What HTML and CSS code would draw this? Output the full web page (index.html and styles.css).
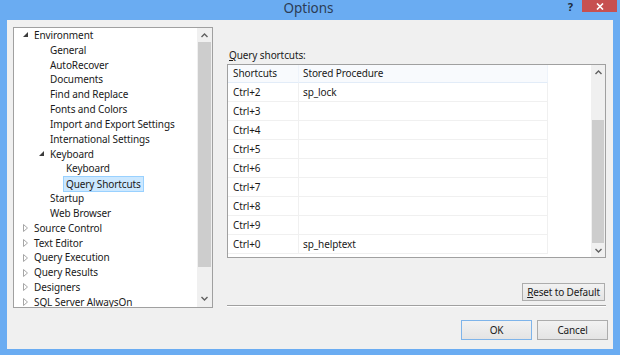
FILE: index.html
```html
<!DOCTYPE html>
<html lang="en">
<head>
    <meta charset="UTF-8">
    <title>Options</title>
    <link rel="stylesheet" href="styles.css">
</head>
<body>

    <div class="window">
        <div class="titlebar">
            <span></span>
            <span class="title">Options</span>
            <div class="controls">
                <span class="help">?</span>
                <span class="close">
                    <svg width="8" height="7" viewBox="0 0 8 7"><path d="M1 0.5 L7 6.5 M7 0.5 L1 6.5" stroke="#fff" stroke-width="1.6"/></svg>
                </span>
            </div>
        </div>

        <div class="client">
            <div class="top">
                <div class="tree">
                    <ul class="tree-list">
                        <li class="lvl0"><span class="arrow"><svg width="6" height="6" viewBox="0 0 6 6"><polygon points="5,0 5,5 0,5" fill="#3c3c3c"/></svg></span>Environment</li>
                        <li class="lvl1"><span class="arrow"></span>General</li>
                        <li class="lvl1"><span class="arrow"></span>AutoRecover</li>
                        <li class="lvl1"><span class="arrow"></span>Documents</li>
                        <li class="lvl1"><span class="arrow"></span>Find and Replace</li>
                        <li class="lvl1"><span class="arrow"></span>Fonts and Colors</li>
                        <li class="lvl1"><span class="arrow"></span>Import and Export Settings</li>
                        <li class="lvl1"><span class="arrow"></span>International Settings</li>
                        <li class="lvl1"><span class="arrow"><svg width="6" height="6" viewBox="0 0 6 6"><polygon points="5,0 5,5 0,5" fill="#3c3c3c"/></svg></span>Keyboard</li>
                        <li class="lvl2"><span class="arrow"></span>Keyboard</li>
                        <li class="lvl2"><span class="arrow"></span><span class="sel">Query Shortcuts</span></li>
                        <li class="lvl1"><span class="arrow"></span>Startup</li>
                        <li class="lvl1"><span class="arrow"></span>Web Browser</li>
                        <li class="lvl0"><span class="arrow"><svg width="5" height="8" viewBox="0 0 5 8"><polygon points="0.5,0.5 4.5,4 0.5,7.5" fill="none" stroke="#a6a6a6"/></svg></span>Source Control</li>
                        <li class="lvl0"><span class="arrow"><svg width="5" height="8" viewBox="0 0 5 8"><polygon points="0.5,0.5 4.5,4 0.5,7.5" fill="none" stroke="#a6a6a6"/></svg></span>Text Editor</li>
                        <li class="lvl0"><span class="arrow"><svg width="5" height="8" viewBox="0 0 5 8"><polygon points="0.5,0.5 4.5,4 0.5,7.5" fill="none" stroke="#a6a6a6"/></svg></span>Query Execution</li>
                        <li class="lvl0"><span class="arrow"><svg width="5" height="8" viewBox="0 0 5 8"><polygon points="0.5,0.5 4.5,4 0.5,7.5" fill="none" stroke="#a6a6a6"/></svg></span>Query Results</li>
                        <li class="lvl0"><span class="arrow"><svg width="5" height="8" viewBox="0 0 5 8"><polygon points="0.5,0.5 4.5,4 0.5,7.5" fill="none" stroke="#a6a6a6"/></svg></span>Designers</li>
                        <li class="lvl0"><span class="arrow"><svg width="5" height="8" viewBox="0 0 5 8"><polygon points="0.5,0.5 4.5,4 0.5,7.5" fill="none" stroke="#a6a6a6"/></svg></span>SQL Server AlwaysOn</li>
                    </ul>
                    <div class="vscroll tree-scroll">
                        <div class="sb-btn sb-up"><svg width="7" height="5" viewBox="0 0 7 5"><path d="M0.5 4 L3.5 1 L6.5 4" fill="none" stroke="#606060" stroke-width="1.4"/></svg></div>
                        <div class="sb-track"><div class="sb-thumb"></div></div>
                        <div class="sb-btn sb-down"><svg width="7" height="5" viewBox="0 0 7 5"><path d="M0.5 1 L3.5 4 L6.5 1" fill="none" stroke="#606060" stroke-width="1.4"/></svg></div>
                    </div>
                </div>

                <div class="panel">
                    <div class="label"><u>Q</u>uery shortcuts:</div>
                    <div class="grid">
                        <div class="grid-body">
                            <div class="row head"><div class="cell">Shortcuts</div><div class="cell">Stored Procedure</div></div>
                            <div class="row"><div class="cell">Ctrl+2</div><div class="cell">sp_lock</div></div>
                            <div class="row"><div class="cell">Ctrl+3</div><div class="cell"></div></div>
                            <div class="row"><div class="cell">Ctrl+4</div><div class="cell"></div></div>
                            <div class="row"><div class="cell">Ctrl+5</div><div class="cell"></div></div>
                            <div class="row"><div class="cell">Ctrl+6</div><div class="cell"></div></div>
                            <div class="row"><div class="cell">Ctrl+7</div><div class="cell"></div></div>
                            <div class="row"><div class="cell">Ctrl+8</div><div class="cell"></div></div>
                            <div class="row"><div class="cell">Ctrl+9</div><div class="cell"></div></div>
                            <div class="row"><div class="cell">Ctrl+0</div><div class="cell">sp_helptext</div></div>
                        </div>
                        <div class="vscroll grid-scroll">
                            <div class="sb-btn sb-up"><svg width="7" height="5" viewBox="0 0 7 5"><path d="M0.5 4 L3.5 1 L6.5 4" fill="none" stroke="#606060" stroke-width="1.4"/></svg></div>
                            <div class="sb-track"><div class="sb-thumb"></div></div>
                            <div class="sb-btn sb-down"><svg width="7" height="5" viewBox="0 0 7 5"><path d="M0.5 1 L3.5 4 L6.5 1" fill="none" stroke="#606060" stroke-width="1.4"/></svg></div>
                        </div>
                    </div>
                    <div class="reset-row">
                        <button class="btn reset"><u>R</u>eset to Default</button>
                    </div>
                    <div class="sep"></div>
                </div>
            </div>

            <div class="buttons">
                <button class="btn default">OK</button>
                <button class="btn">Cancel</button>
            </div>
        </div>
    </div>

</body>
</html>
```

FILE: styles.css
```css
* {
    box-sizing: border-box;
}

body {
    margin: 0;
    font-family: 'Noto Sans', 'Open Sans', sans-serif;
    font-size: 10px;
    letter-spacing: -0.1px;
    color: #1a1a1a;
}

.window {
    width: 620px;
    height: 355px;
    background: #6aacf2;
    display: flex;
    flex-direction: column;
    padding: 0 7px 6px 7px;
}

.titlebar {
    height: 20px;
    margin: 0 -7px;
    padding-right: 3px;
    display: grid;
    grid-template-columns: 1fr auto 1fr;
    align-items: start;
}

.title {
    font-size: 13.5px;
    line-height: 17px;
    letter-spacing: 0;
    color: #2c3c55;
}

.controls {
    justify-self: end;
    display: flex;
    align-items: flex-start;
}

.help {
    font-size: 11px;
    font-weight: bold;
    line-height: 11px;
    color: #1c2a3a;
    margin: 1px 9px 0 0;
}

.close {
    width: 35px;
    height: 12px;
    background: #c75050;
    display: flex;
    justify-content: center;
    align-items: center;
}

.client {
    flex: 1;
    background: #f0f0f0;
    padding: 7px 5px 0 6px;
    display: flex;
    flex-direction: column;
}

.top {
    display: flex;
    gap: 14px;
}

/* tree */

.tree {
    width: 200px;
    height: 281px;
    border: 1px solid #a0a0a0;
    background: #fff;
    display: flex;
}

.tree-list {
    flex: 1;
    list-style: none;
    margin: 0;
    padding: 0;
    overflow: hidden;
}

.tree-list li {
    height: 14.83px;
    line-height: 14.83px;
    display: flex;
    align-items: center;
    white-space: nowrap;
}

.lvl0 { padding-left: 8px; }
.lvl1 { padding-left: 24px; }
.lvl2 { padding-left: 40px; }

.arrow {
    width: 12px;
    display: flex;
    align-items: center;
    padding-left: 1px;
}

.sel {
    background: #cce8ff;
    border: 1px solid #99d1ff;
    padding: 0 2px;
    margin-left: -3px;
    line-height: 14px;
}

/* scrollbars */

.vscroll {
    background: #f0f0f0;
    display: flex;
    flex-direction: column;
    padding: 0 1px;
}

.sb-btn {
    display: flex;
    justify-content: center;
    align-items: center;
}

.sb-track {
    flex: 1;
    display: flex;
    flex-direction: column;
}

.sb-thumb {
    background: #cdcdcd;
}

.tree-scroll { width: 15px; }
.tree-scroll .sb-up { height: 14px; }
.tree-scroll .sb-down { height: 17px; }
.tree-scroll .sb-thumb { height: 225px; }

.grid-scroll { width: 14px; }
.grid-scroll .sb-up { height: 15px; }
.grid-scroll .sb-down { height: 14px; }
.grid-scroll .sb-track { justify-content: flex-end; }
.grid-scroll .sb-thumb { height: 123px; }

/* query shortcuts */

.panel {
    width: 379px;
    display: flex;
    flex-direction: column;
}

.label {
    margin-top: 21px;
    height: 16px;
    line-height: 15px;
    padding-left: 2px;
}

.grid {
    height: 194px;
    border: 1px solid #a0a0a0;
    background: #fff;
    display: flex;
}

.grid-body {
    flex: 1;
}

.row {
    display: grid;
    grid-template-columns: 71px 249px;
}

.cell {
    height: 19px;
    line-height: 18px;
    padding-left: 4px;
    border-bottom: 1px solid #f0f0f0;
    border-right: 1px solid #f0f0f0;
    white-space: nowrap;
}

.row .cell:first-child {
    padding-left: 5px;
}

.head .cell {
    height: 18px;
    line-height: 17px;
    background: #f8fafd;
    border-bottom: 1px solid #e2ecf8;
    border-right: 1px solid #eef3fa;
}

.reset-row {
    display: flex;
    justify-content: flex-end;
    margin-top: 25px;
    padding-right: 1px;
}

.sep {
    margin-top: 4px;
    height: 2px;
    border-top: 1px solid #a0a0a0;
    border-bottom: 1px solid #fff;
}

.btn {
    font-family: inherit;
    font-size: 10px;
    letter-spacing: -0.15px;
    color: #1a1a1a;
    padding: 0;
    background: linear-gradient(#f2f2f2, #e4e4e4);
    border: 1px solid #acacac;
}

.reset {
    width: 83px;
    height: 18px;
}

.buttons {
    display: flex;
    justify-content: flex-end;
    gap: 5px;
    margin-top: 12px;
}

.buttons .btn {
    width: 71px;
    height: 20px;
}

.btn.default {
    border-color: #7eb4ea;
}
```
